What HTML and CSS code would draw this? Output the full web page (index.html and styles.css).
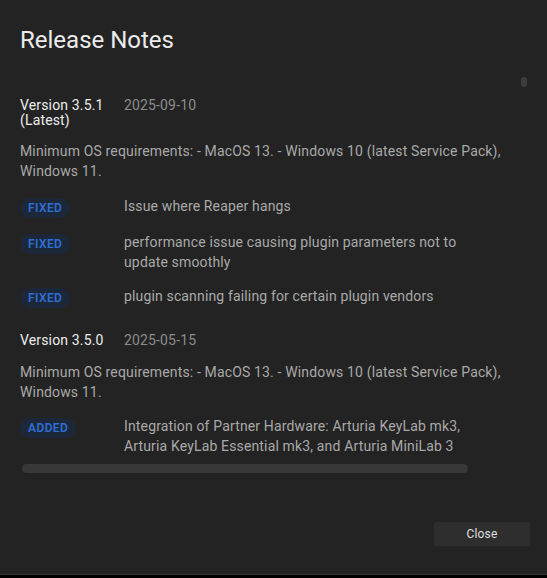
FILE: index.html
```html
<!DOCTYPE html>
<html lang="en">
<head>
<meta charset="utf-8">
<title>Release Notes</title>
<link rel="stylesheet" href="styles.css">
</head>
<body>
<div class="dialog">
  <h1 class="title">Release Notes</h1>
  <div class="scroll">
    <div class="vthumb"></div>
    <section class="release">
      <div class="rel-head">
        <div class="ver">Version 3.5.1 (Latest)</div>
        <div class="date">2025-09-10</div>
      </div>
      <p class="desc">Minimum OS requirements: - MacOS 13. - Windows 10 (latest Service Pack), Windows 11.</p>
      <ul class="changes">
        <li class="change"><span class="badge">FIXED</span><span class="text">Issue where Reaper hangs</span></li>
        <li class="change"><span class="badge">FIXED</span><span class="text">performance issue causing plugin parameters not to update smoothly</span></li>
        <li class="change"><span class="badge">FIXED</span><span class="text">plugin scanning failing for certain plugin vendors</span></li>
      </ul>
    </section>
    <section class="release">
      <div class="rel-head">
        <div class="ver">Version 3.5.0</div>
        <div class="date">2025-05-15</div>
      </div>
      <p class="desc">Minimum OS requirements: - MacOS 13. - Windows 10 (latest Service Pack), Windows 11.</p>
      <ul class="changes">
        <li class="change"><span class="badge">ADDED</span><span class="text">Integration of Partner Hardware: Arturia KeyLab mk3, Arturia KeyLab Essential mk3, and Arturia MiniLab 3</span></li>
      </ul>
    </section>
    <div class="hscroll"></div>
  </div>
  <div class="footer">
    <button class="close" type="button">Close</button>
  </div>
</div>
</body>
</html>
```

FILE: styles.css
```css
* { box-sizing: border-box; }
html, body {
  margin: 0;
  padding: 0;
  background: #000;
}
body {
  font-family: Roboto, "Liberation Sans", Arial, sans-serif;
  width: 547px;
  height: 578px;
  overflow: hidden;
}
.dialog {
  width: 547px;
  height: 575px;
  background: #232323;
  border-bottom: 1px solid #363636;
  display: flex;
  flex-direction: column;
  padding: 26px 0 28px 0;
}
.title {
  margin: 0 0 0 20px;
  font-size: 24px;
  line-height: 28px;
  font-weight: 400;
  color: #ececec;
}
.scroll {
  position: relative;
  margin-top: 22px;
  padding: 22px 0 0 20px;
}
.vthumb {
  position: absolute;
  top: 1px;
  right: 20px;
  width: 6px;
  height: 10px;
  border-radius: 3px;
  background: #3d3d3d;
}
.release + .release {
  margin-top: 25px;
}
.rel-head {
  display: grid;
  grid-template-columns: 104px 1fr;
  font-size: 14px;
  line-height: 15px;
  letter-spacing: 0.15px;
}
.ver {
  color: #ececec;
  padding-right: 10px;
}
.date {
  color: #8c8c8c;
}
.desc {
  margin: 14px 0 0 0;
  width: 505px;
  font-size: 14px;
  line-height: 19.5px;
  letter-spacing: 0.15px;
  color: #a9a9a9;
}
.changes {
  list-style: none;
  margin: 15px 0 0 0;
  padding: 0;
  display: flex;
  flex-direction: column;
  gap: 14px;
}
.release + .release .desc { margin-top: 15px; }
.release + .release .changes { margin-top: 14px; }
.change {
  display: grid;
  grid-template-columns: 104px 355px;
  align-items: start;
}
.badge {
  justify-self: start;
  margin-top: 2px;
  height: 20px;
  padding: 0 8px;
  border-radius: 10px;
  background: #1c2839;
  color: #2e6fd6;
  font-size: 12px;
  font-weight: 600;
  line-height: 20px;
  letter-spacing: 0.4px;
}
.text {
  font-size: 14px;
  line-height: 20px;
  letter-spacing: 0.15px;
  color: #a9a9a9;
}
.hscroll {
  margin: 8px 0 0 2px;
  width: 446px;
  height: 9px;
  border-radius: 5px;
  background: #383838;
}
.footer {
  margin-top: auto;
  display: flex;
  justify-content: flex-end;
  padding-right: 17px;
}
.close {
  width: 96px;
  height: 24px;
  border: none;
  border-radius: 3px;
  background: #2e2e2e;
  color: #dedede;
  font-family: Roboto, "Liberation Sans", Arial, sans-serif;
  font-size: 12px;
  letter-spacing: 0.2px;
  padding: 0;
}
```
